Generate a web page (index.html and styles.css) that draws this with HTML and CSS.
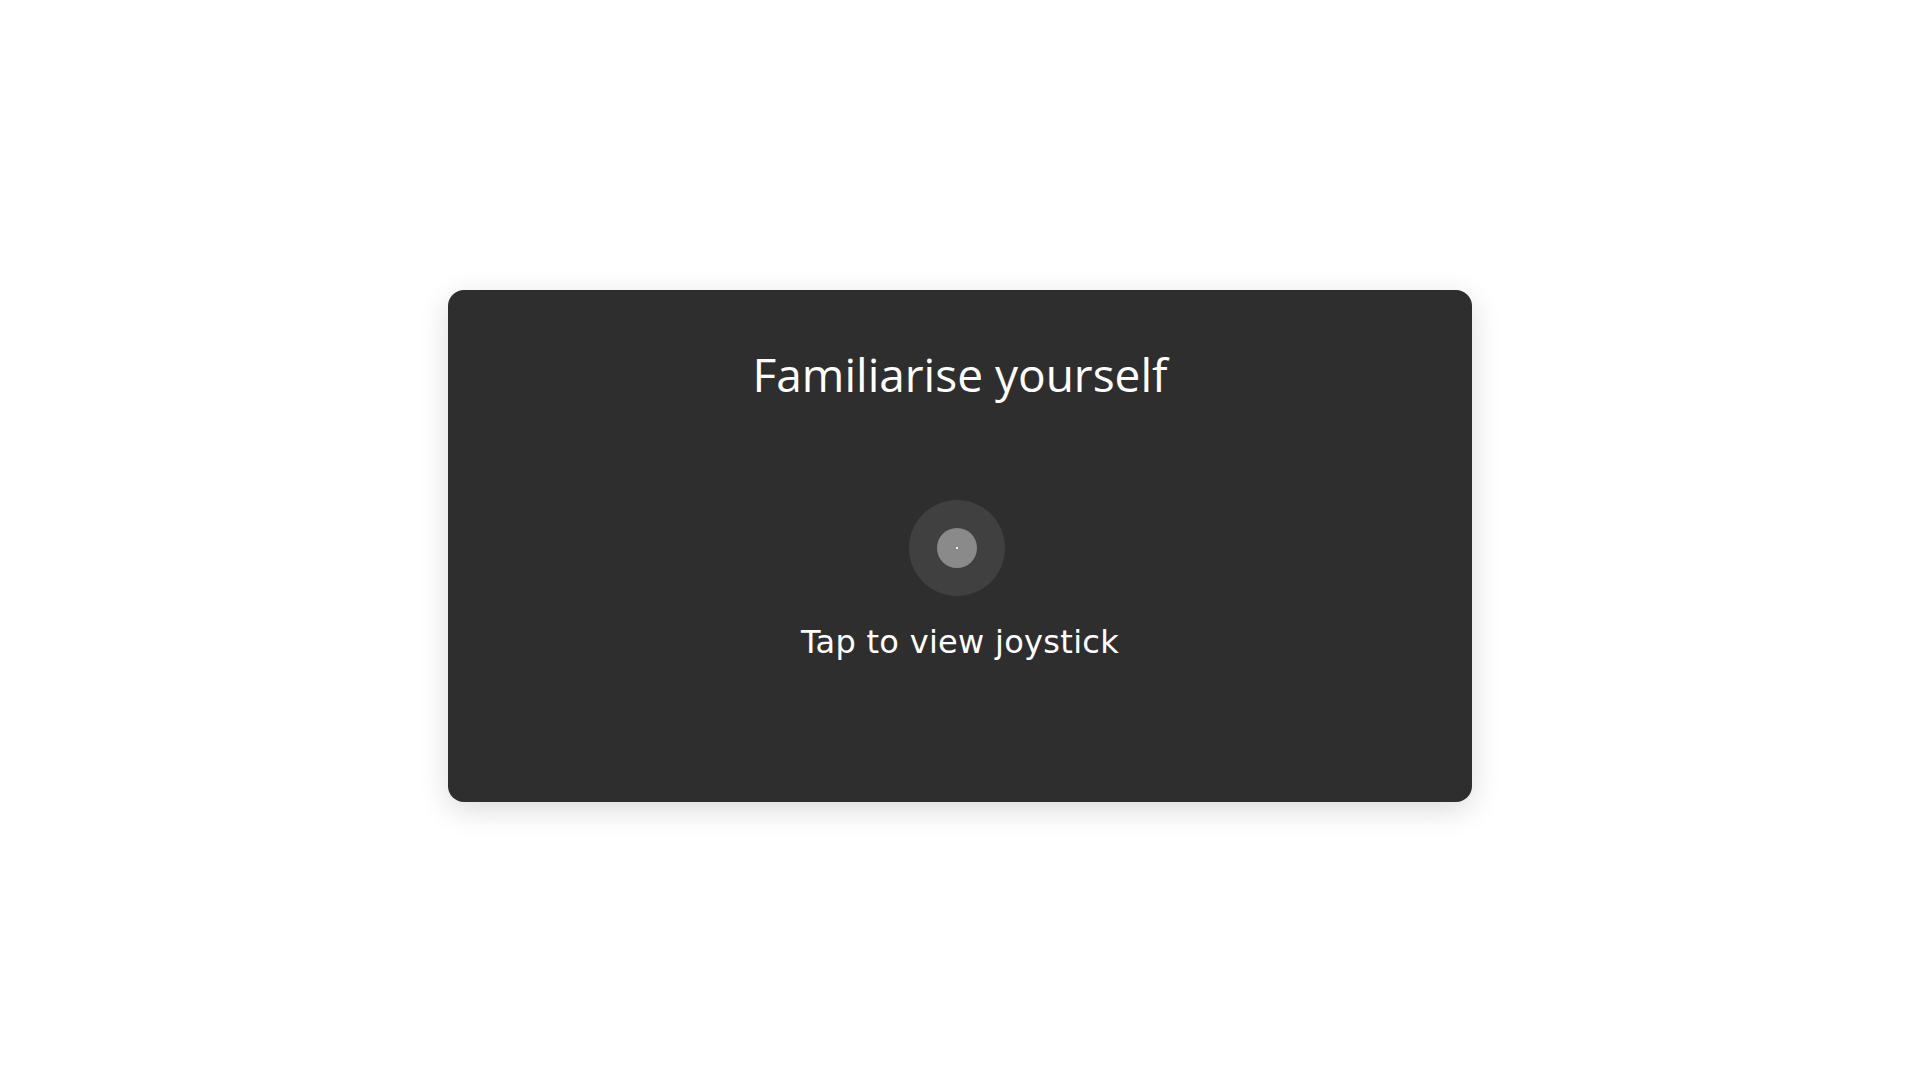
FILE: index.html
```html
<!DOCTYPE html>
<html lang="en">
<head>
    <meta charset="UTF-8">
    <meta name="viewport" content="width=device-width, initial-scale=1.0">
    <title>Familiarise yourself</title>
    <link rel="stylesheet" href="styles.css">
</head>
<body>
    <div class="card">
        <h1 class="title">Familiarise yourself</h1>
        <div class="joystick-area">
            <div class="joystick">
                <div class="knob">
                    <div class="dot"></div>
                </div>
            </div>
            <p class="hint">Tap to view joystick</p>
        </div>
    </div>
</body>
</html>
```

FILE: styles.css
```css
body {
    margin: 0;
    padding: 0;
    background: #fff;
    height: 100vh;
    display: flex;
    justify-content: center;
    align-items: center;
    font-family: 'Open Sans', sans-serif;
}
.card {
    width: 1024px;
    height: 512px;
    margin-top: 12px;
    background: #2e2e2e;
    border-radius: 16px;
    box-shadow: 0 8px 30px rgba(0, 0, 0, 0.14);
    color: #fff;
    display: flex;
    flex-direction: column;
    align-items: center;
    box-sizing: border-box;
    padding-top: 53px;
}
.title {
    margin: 0;
    font-weight: 400;
    font-size: 46px;
    line-height: 62px;
}
.joystick-area {
    display: flex;
    flex-direction: column;
    align-items: center;
    margin-top: 95px;
}
.joystick {
    width: 96px;
    height: 96px;
    border-radius: 50%;
    background: #404040;
    display: flex;
    justify-content: center;
    align-items: center;
    margin-left: -6px;
}
.knob {
    width: 40px;
    height: 40px;
    border-radius: 50%;
    background: #8a8a8a;
    display: flex;
    justify-content: center;
    align-items: center;
}
.dot {
    width: 2px;
    height: 2px;
    background: #eee;
}
.hint {
    margin: 26px 0 0;
    font-family: 'DejaVu Sans', sans-serif;
    font-size: 32px;
    line-height: 40px;
    letter-spacing: 0.3px;
}
```
